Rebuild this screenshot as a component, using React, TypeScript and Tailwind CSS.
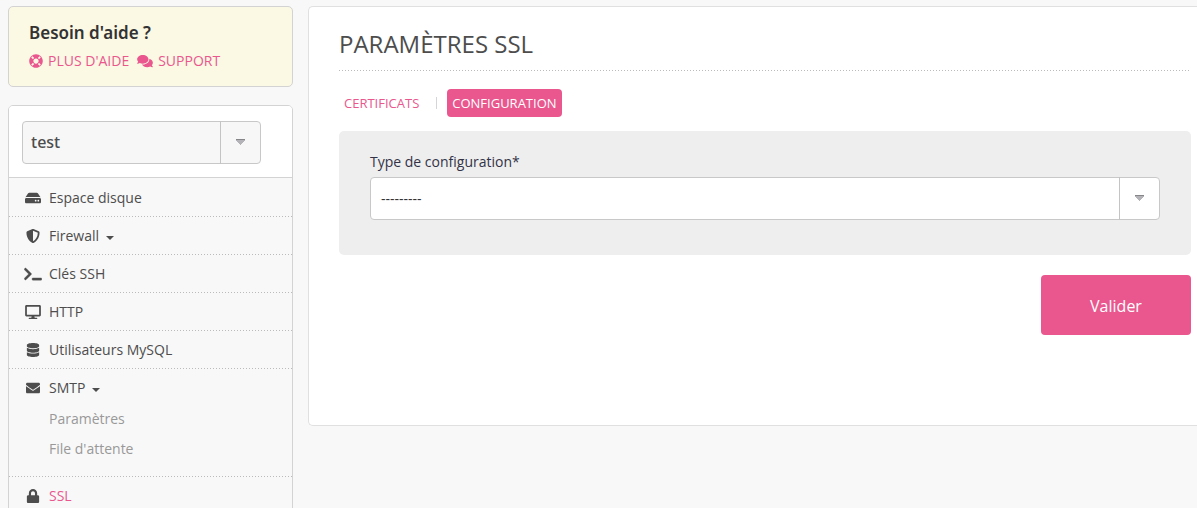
import type { ReactNode } from "react";
import type { IconType } from "react-icons";
import {
  FaComments,
  FaDatabase,
  FaDesktop,
  FaEnvelope,
  FaHdd,
  FaLifeRing,
  FaLock,
  FaShieldAlt,
  FaTerminal,
} from "react-icons/fa";

type MenuEntry = {
  label: string;
  icon: IconType;
  iconSize?: string;
  caret?: boolean;
  active?: boolean;
  children?: string[];
};

const menu: MenuEntry[] = [
  { label: "Espace disque", icon: FaHdd, iconSize: "size-4" },
  { label: "Firewall", icon: FaShieldAlt, caret: true },
  { label: "Clés SSH", icon: FaTerminal, iconSize: "h-[14px] w-[18px] stroke-current stroke-[14]" },
  { label: "HTTP", icon: FaDesktop, iconSize: "h-[14px] w-4" },
  { label: "Utilisateurs MySQL", icon: FaDatabase },
  { label: "SMTP", icon: FaEnvelope, caret: true, children: ["Paramètres", "File d'attente"] },
  { label: "SSL", icon: FaLock, active: true },
];

function DottedLine() {
  return (
    <div
      aria-hidden="true"
      className="h-px bg-[repeating-linear-gradient(90deg,#bbb_0_1px,transparent_1px_3px)]"
    />
  );
}

function SelectArrow() {
  return (
    <span
      aria-hidden="true"
      className="pointer-events-none absolute inset-y-0 right-0 flex w-[41px] items-center justify-center border-l border-[#c4c4c4] pr-[2px] pb-[2px]"
    >
      <svg width="9" height="6" viewBox="0 0 9 6" shapeRendering="crispEdges">
        <path d="M0 0h9v1H0z" fill="#85858a" />
        <path d="M0 1h9L5 6H4z" fill="#b4b4b8" />
      </svg>
    </span>
  );
}

type SelectBoxProps = { id?: string; label?: string; className: string; children: ReactNode };

function SelectBox({ id, label, className, children }: SelectBoxProps) {
  return (
    <div className="relative">
      <select
        id={id}
        aria-label={label}
        className={`block h-[43px] w-full appearance-none rounded border border-[#c8c8c8] pr-12 ${className}`}
      >
        {children}
      </select>
      <SelectArrow />
    </div>
  );
}

function MenuItem({ entry }: { entry: MenuEntry }) {
  const Icon = entry.icon;
  return (
    <li>
      <a href="#" className="flex items-center pt-[9px] pb-2 pl-[14px] leading-5">
        <span className="flex w-[19px] justify-center text-[#4d4d4d]">
          <Icon className={entry.iconSize ?? "size-[14px]"} />
        </span>
        <span className={entry.active ? "ml-[7px] text-[#e9578e]" : "ml-[7px]"}>{entry.label}</span>
        {entry.caret && (
          <svg width="8" height="4" viewBox="0 0 8 4" className="mt-1 ml-[7px]" aria-hidden="true">
            <path d="M0 0h8L4 4z" fill="#4d4d4d" />
          </svg>
        )}
      </a>
      {entry.children && (
        <ul className="flex flex-col gap-1 pb-[14px] pl-10">
          {entry.children.map((child) => (
            <li key={child} className="leading-[26px]">
              <a href="#" className="text-[#999]">
                {child}
              </a>
            </li>
          ))}
        </ul>
      )}
      <DottedLine />
    </li>
  );
}

function Sidebar() {
  return (
    <aside className="flex w-[285px] shrink-0 flex-col gap-[18px]">
      <section className="rounded-[5px] border border-[#d3d3d3] bg-[#fbf8e4] px-5 pt-[14px] pb-[13px]">
        <h2 className="font-['Noto_Sans',sans-serif] text-[17px] leading-6 font-semibold text-[#333]">
          Besoin d'aide ?
        </h2>
        <div className="mt-1 flex items-center gap-2 leading-6 text-[#e9578e]">
          <a href="#" className="flex items-center gap-[5px]">
            <FaLifeRing size={14} />
            PLUS D'AIDE
          </a>
          <a href="#" className="flex items-center gap-[5px]">
            <FaComments className="h-[14px] w-4" />
            SUPPORT
          </a>
        </div>
      </section>
      <nav className="rounded-[5px] border border-[#d3d3d3]">
        <div className="rounded-t border-b border-[#d3d3d3] bg-white pt-[15px] pr-[31px] pb-[13px] pl-[13px]">
          <SelectBox
            label="Compte"
            className="bg-[#f7f7f7] pb-[2px] pl-2 font-['Noto_Sans',sans-serif] text-base font-medium text-[#4d4d4d]"
          >
            <option>test</option>
          </SelectBox>
        </div>
        <ul className="pt-px">
          {menu.map((entry) => (
            <MenuItem key={entry.label} entry={entry} />
          ))}
        </ul>
      </nav>
    </aside>
  );
}

export default function App() {
  return (
    <div className="flex h-screen items-start gap-[15px] overflow-hidden bg-[#f8f8f8] pt-[6px] pl-2 font-['Open_Sans',sans-serif] text-sm text-[#4d4d4d]">
      <Sidebar />
      <main className="min-w-0 grow rounded-l-[5px] border-y border-l border-[#e0e0e0] bg-white pt-[19px] pr-[6px] pb-[90px] pl-[30px]">
        <h1 className="pb-2 text-2xl leading-9">PARAMÈTRES SSL</h1>
        <DottedLine />
        <div className="mt-[18px] flex items-center text-[13px] leading-7">
          <a href="#" className="rounded px-[5px] text-[#e9578e]">
            CERTIFICATS
          </a>
          <span aria-hidden="true" className="ml-3 h-3 w-px bg-[#d5d5d9]" />
          <a href="#" aria-current="page" className="ml-[10px] rounded bg-[#e9578e] px-[5px] text-white">
            CONFIGURATION
          </a>
        </div>
        <form>
          <div className="mt-[14px] rounded-[5px] bg-[#eee] px-[31px] pt-5 pb-[35px]">
            <label htmlFor="config-type" className="mb-1 block leading-[22px] text-[#333347]">
              Type de configuration*
            </label>
            <SelectBox id="config-type" className="bg-white pl-[10px] text-[#333]">
              <option>---------</option>
            </SelectBox>
          </div>
          <div className="mt-5 flex justify-end">
            <button type="button" className="h-[60px] w-[150px] rounded bg-[#e9578e] pt-[2px] text-base text-white">
              Valider
            </button>
          </div>
        </form>
      </main>
    </div>
  );
}
